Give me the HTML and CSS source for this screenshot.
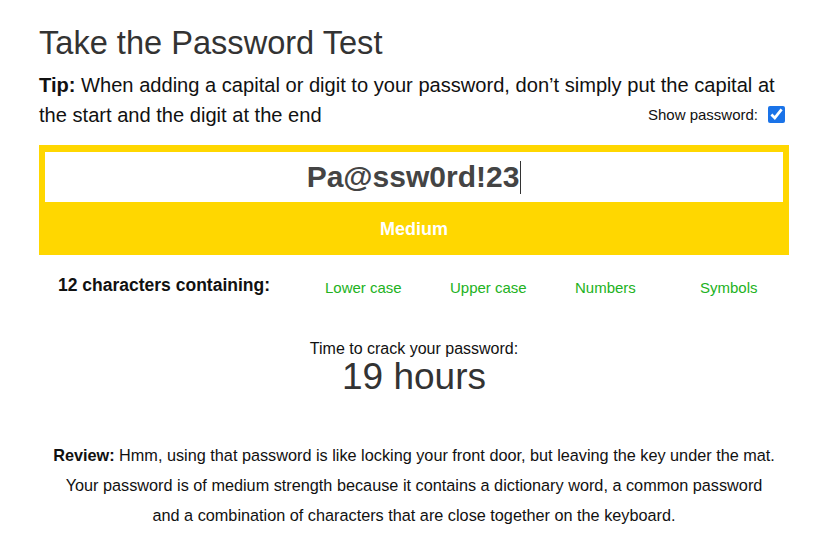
FILE: index.html
```html
<!DOCTYPE html>
<html lang="en">
<head>
<meta charset="utf-8">
<title>Take the Password Test</title>
<link rel="stylesheet" href="styles.css">
</head>
<body>
<main class="page">
  <h1 class="title">Take the Password Test</h1>
  <p class="tip"><strong class="tip-label">Tip:</strong> When adding a capital or digit to your password, don’t simply put the capital at the start and the digit at the end<label class="show">Show password: <input class="show-box" type="checkbox" checked></label></p>

  <section class="meter">
    <div class="pw-field"><span class="pw-text">Pa@ssw0rd!23</span><span class="caret"></span></div>
    <div class="strength">Medium</div>
  </section>

  <div class="criteria">
    <div class="count">12 characters containing:</div>
    <div class="crit">Lower case</div>
    <div class="crit">Upper case</div>
    <div class="crit">Numbers</div>
    <div class="crit">Symbols</div>
  </div>

  <div class="crack">
    <div class="crack-label">Time to crack your password:</div>
    <div class="crack-time">19 hours</div>
  </div>

  <p class="review"><strong>Review:</strong> Hmm, using that password is like locking your front door, but leaving the key under the mat.<br>Your password is of medium strength because it contains a dictionary word, a common password<br>and a combination of characters that are close together on the keyboard.</p>
</main>
</body>
</html>
```

FILE: styles.css
```css
html, body {
  margin: 0;
  padding: 0;
  background: #ffffff;
}

body {
  font-family: "Liberation Sans", Arial, sans-serif;
  color: #111;
}

.page {
  width: 750px;
  margin-left: 39px;
}

.title {
  margin: 24px 0 0;
  font-size: 32.6px;
  font-weight: normal;
  line-height: 37px;
  color: #333;
}

.tip {
  margin: 9px 0 0;
  font-size: 20.1px;
  line-height: 30px;
  color: #111;
}

.tip-label {
  font-weight: bold;
}

.show {
  float: right;
  display: flex;
  align-items: center;
  gap: 10px;
  height: 29px;
  margin-right: 4px;
  font-size: 15px;
  line-height: 17px;
  color: #111;
}

.show-box {
  width: 17px;
  height: 17px;
  margin: 0;
  accent-color: #1a73e8;
}

.meter {
  margin-top: 15px;
  background: #ffd700;
  padding: 7px 6px 0;
}

.pw-field {
  height: 50px;
  background: #fff;
  display: flex;
  justify-content: center;
  align-items: center;
}

.pw-text {
  font-size: 30px;
  font-weight: bold;
  color: #444;
}

.caret {
  width: 1px;
  height: 33px;
  background: #333;
  margin-left: 1px;
}

.strength {
  height: 53px;
  display: flex;
  align-items: center;
  justify-content: center;
  padding-top: 1px;
  box-sizing: border-box;
  color: #fff;
  font-weight: bold;
  font-size: 18px;
}

.criteria {
  display: grid;
  grid-template-columns: 250px repeat(4, 125px);
  margin-top: 15px;
  height: 30px;
}

.count {
  text-align: center;
  font-weight: bold;
  font-size: 17.5px;
  line-height: 30px;
  color: #111;
}

.crit {
  padding: 3px 0 0 36px;
  font-size: 15px;
  line-height: 30px;
  color: #22b222;
}

.crack {
  margin-top: 39px;
  text-align: center;
}

.crack-label {
  font-size: 16px;
  line-height: 20px;
  color: #111;
}

.crack-time {
  font-size: 37px;
  line-height: 36px;
  color: #333;
}

.review {
  margin: 45px 0 0;
  text-align: center;
  font-size: 16.25px;
  line-height: 30px;
  color: #111;
}
```
